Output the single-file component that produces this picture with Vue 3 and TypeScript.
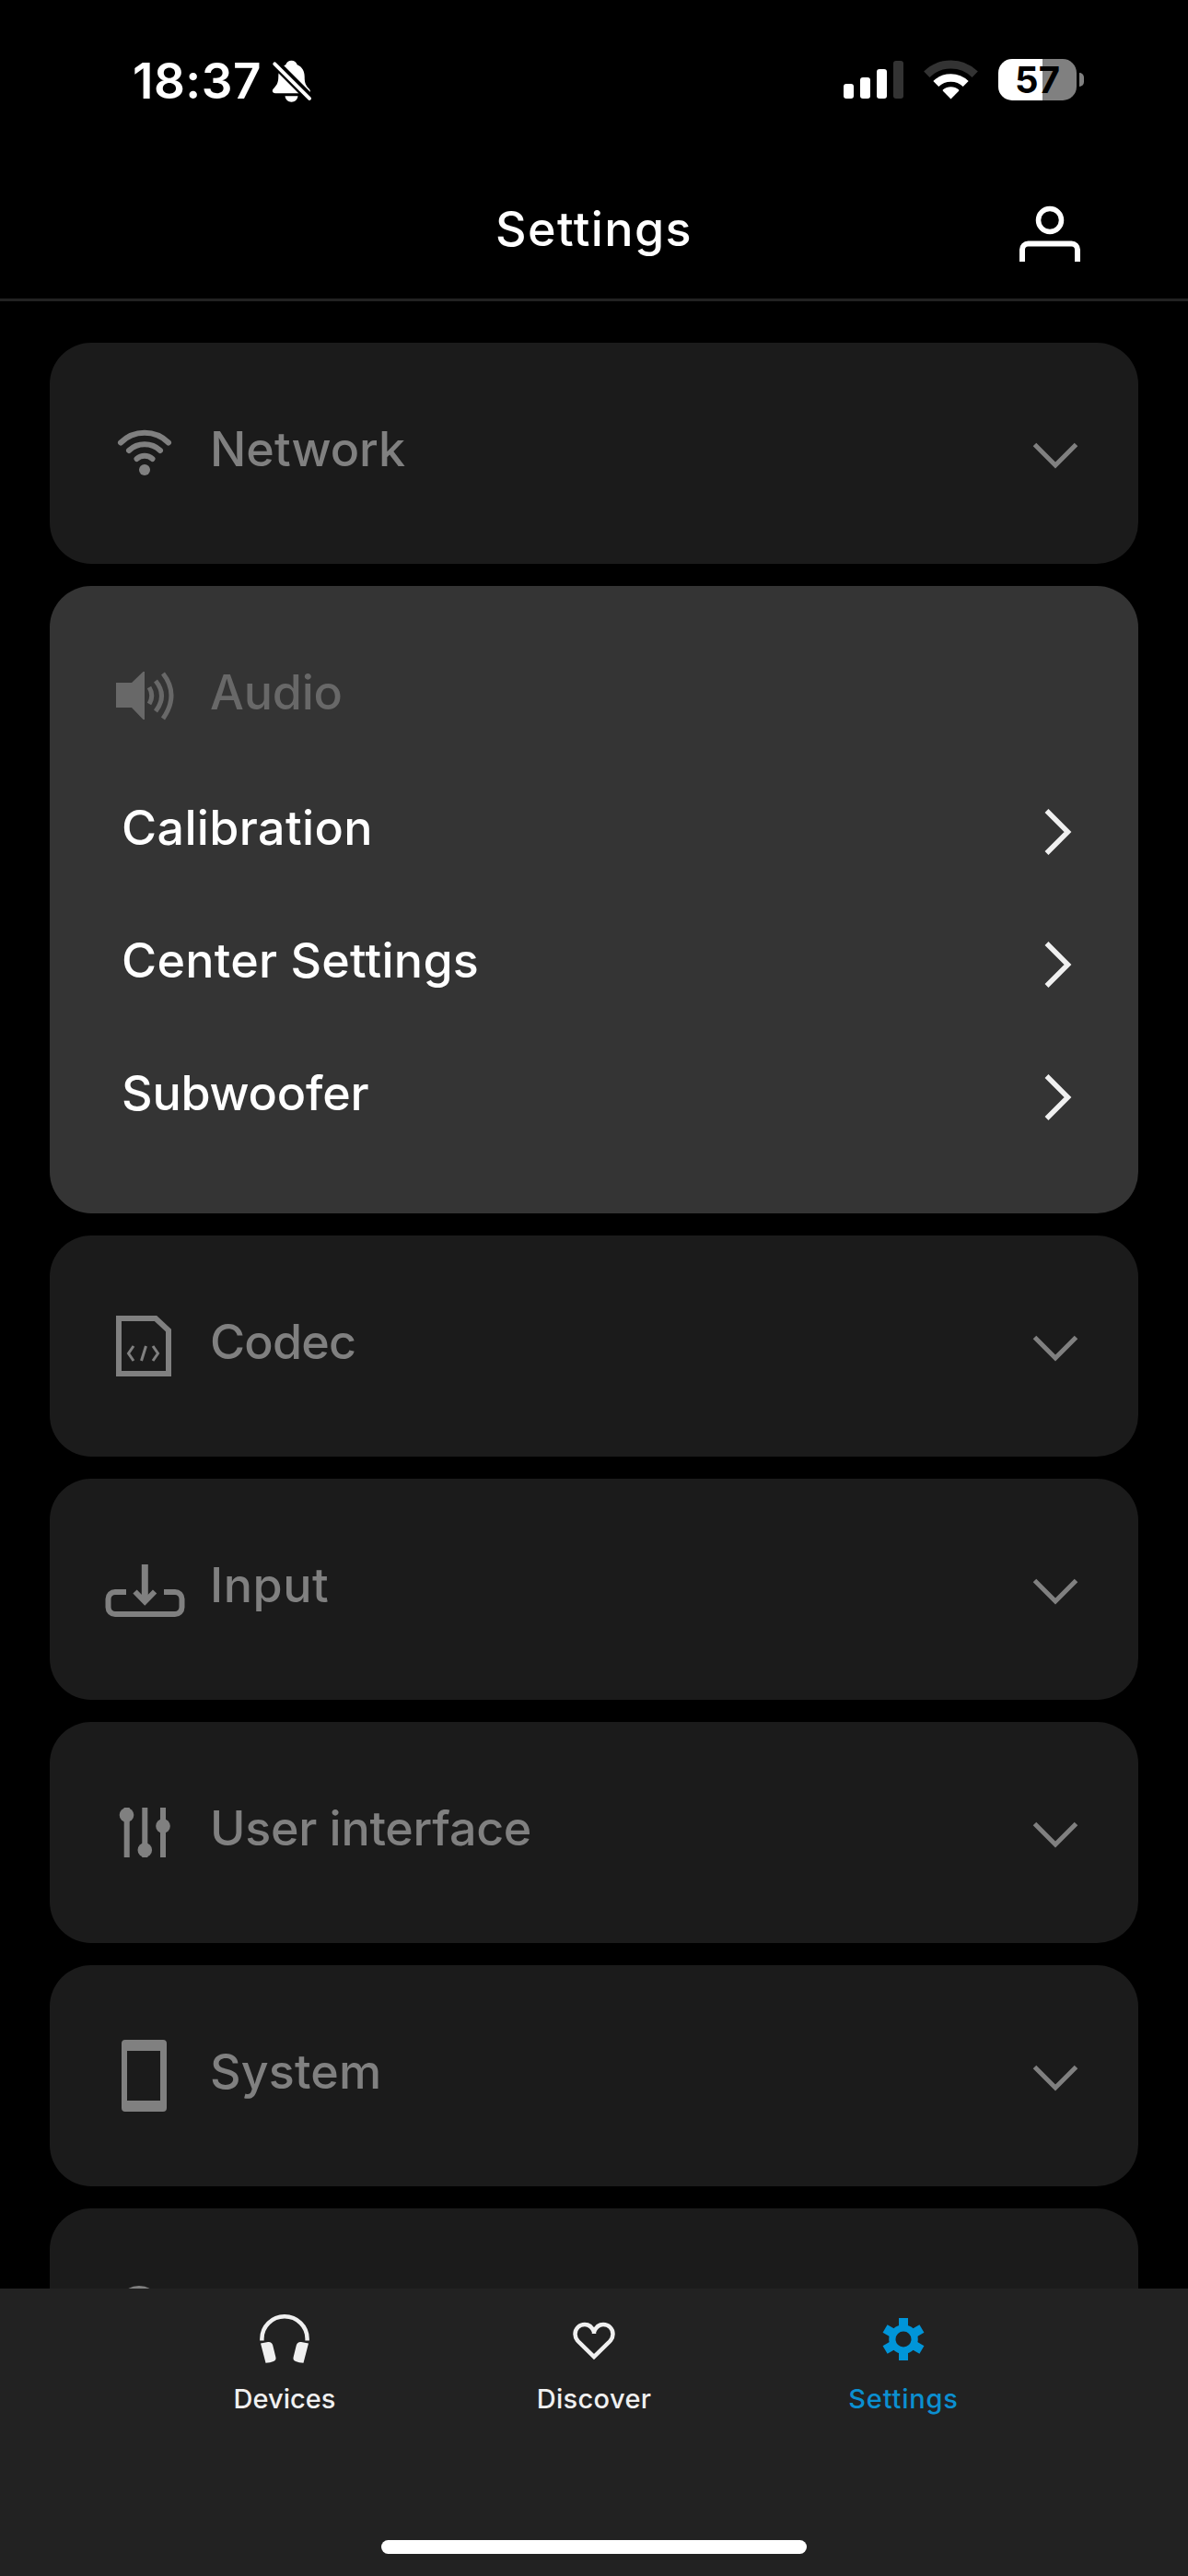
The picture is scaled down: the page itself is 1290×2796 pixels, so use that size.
<script setup lang="ts">
interface Section {
  id: string
  label: string
  tracking: number
  items?: { label: string; tracking: number }[]
}

const sections: Section[] = [
  { id: 'network', label: 'Network', tracking: 0 },
  {
    id: 'audio',
    label: 'Audio',
    tracking: -0.2,
    items: [
      { label: 'Calibration', tracking: 0.36 },
      { label: 'Center Settings', tracking: 0.25 },
      { label: 'Subwoofer', tracking: -0.2 },
    ],
  },
  { id: 'codec', label: 'Codec', tracking: -0.8 },
  { id: 'input', label: 'Input', tracking: 0.55 },
  { id: 'interface', label: 'User interface', tracking: -0.28 },
  { id: 'system', label: 'System', tracking: 0.15 },
  { id: 'more', label: '', tracking: 0 },
]

const tabs = [
  { id: 'devices', label: 'Devices', tracking: 0, active: false },
  { id: 'discover', label: 'Discover', tracking: 0.35, active: false },
  { id: 'settings', label: 'Settings', tracking: 0.8, active: true },
]
</script>

<template>
  <div class="screen">
    <div class="status">
      <span class="time">18:37</span>
      <svg class="bell" viewBox="294 60 48 55" width="48" height="55">
        <path fill="#fff" d="M316.500 65.700c3 0 5.500 2 6.200 4.600 5.300 2.200 8 7 8 13 0 7.500 1.500 9.500 5 13.200 2.300 2.500 1 4.800-1.700 4.800h-35c-3 0-4-2.500-2.300-4.700 3.500-4 5.600-6 5.600-13.300 0-6.500 2.700-10.800 8-13 .7-2.600 3.200-4.600 6.200-4.600z" />
        <path fill="#fff" d="M309.500 104.300h14c-.6 4-3.400 6.400-7 6.400s-6.400-2.400-7-6.400z" />
        <path stroke="#000" stroke-width="10" d="M296 66l43 43" />
        <path stroke="#fff" stroke-width="4" stroke-linecap="round" d="M298.300 69.300l37.700 37.500" />
      </svg>
      <svg class="signal" viewBox="916 60 66 55" width="66" height="55">
        <rect x="916" y="91" width="11" height="16" rx="3" fill="#fff" />
        <rect x="934" y="84" width="11" height="23" rx="3" fill="#fff" />
        <rect x="952" y="75" width="11" height="32" rx="3" fill="#fff" />
        <rect x="970" y="66" width="11" height="41" rx="3" fill="#333" />
      </svg>
      <svg class="wifi" viewBox="1002 60 62 55" width="62" height="55" fill="none">
        <path stroke="#333" stroke-width="9" d="M1006.300 80.700a37.500 37.500 0 0 1 52.400 0" />
        <path stroke="#fff" stroke-width="8.500" d="M1016.300 91a23.200 23.200 0 0 1 32.400 0" />
        <path fill="#fff" d="M1032.500 107.500l-8.600-8.800a1 1 0 0 1 .1-1.400 13 13 0 0 1 17 0 1 1 0 0 1 .1 1.400z" />
      </svg>
      <div class="battery"><span>57</span></div>
      <div class="nub"></div>
    </div>

    <header class="header">
      <h1>Settings</h1>
      <svg class="person" viewBox="1100 208 80 80" width="80" height="80" fill="none" stroke="#fff" stroke-width="6">
        <circle cx="1140" cy="239" r="12.500" stroke-width="5.500" />
        <path d="M1110 284v-13a6.500 6.500 0 0 1 6.500-6.500h47a6.500 6.500 0 0 1 6.500 6.500v13" />
      </svg>
    </header>

    <main class="list">
      <section v-for="s in sections" :key="s.id" class="card" :class="{ open: s.items }">
        <div class="head">
          <svg class="icon" viewBox="55 67 96 96" width="96" height="96" fill="none" stroke="currentColor" stroke-width="6">
            <g v-if="s.id === 'network'" stroke-linecap="round">
              <path d="M77 108.500a37 37 0 0 1 52 0" />
              <path d="M86 117a25 25 0 0 1 34 0" />
              <path d="M94.500 126a13 13 0 0 1 17 0" />
              <circle cx="103" cy="138" r="6" fill="currentColor" stroke="none" />
            </g>
            <g v-else-if="s.id === 'audio'" stroke-width="5">
              <path fill="currentColor" stroke="none" d="M72 105h17l12.500-12h1.500v52h-1.500L89 132H72z" />
              <path d="M108 110q5.500 9 0 18" />
              <path d="M115 103q13 16 0 33" />
              <path d="M123 95q18 23 0 49" />
            </g>
            <g v-else-if="s.id === 'codec'">
              <path d="M75 90h40l14 13v47H75z" />
              <path stroke-width="3" d="M91 120l-5.500 8 5.500 8M104.500 120l-5 16M112 120l5.500 8-5.500 8" />
            </g>
            <g v-else-if="s.id === 'input'">
              <path d="M83 123H71a7.500 7.500 0 0 0-7.500 7.500v9a7.500 7.500 0 0 0 7.500 7.500h65a7.500 7.500 0 0 0 7.500-7.500v-9a7.500 7.500 0 0 0-7.500-7.500h-12" />
              <path stroke-width="7" d="M103.300 93v41" />
              <path d="M92.500 122.500l10.800 11 10.800-11" />
            </g>
            <g v-else-if="s.id === 'interface'">
              <path d="M83.700 93v54M103.300 93v54M123 93v54" />
              <g fill="currentColor" stroke="none">
                <circle cx="83.500" cy="101" r="7.800" />
                <circle cx="103.300" cy="139" r="7.800" />
                <circle cx="123" cy="113" r="7.800" />
              </g>
            </g>
            <path
              v-else-if="s.id === 'system'"
              fill="currentColor"
              stroke="none"
              fill-rule="evenodd"
              d="M82 81h41a4 4 0 0 1 4 4v70a4 4 0 0 1-4 4H82a4 4 0 0 1-4-4V85a4 4 0 0 1 4-4zM84 93v54h36V93z"
            />
            <circle v-else cx="97" cy="108" r="21" />
          </svg>
          <span class="label" :style="{ letterSpacing: s.tracking + 'px' }">{{ s.label }}</span>
          <svg v-if="!s.items" class="down" viewBox="1062 85 60 60" width="60" height="60" fill="none" stroke="currentColor" stroke-width="5">
            <path d="M1069.500 110.500l22.500 22.500 22.500-22.500" />
          </svg>
        </div>
        <div v-for="item in s.items" :key="item.label" class="row">
          <span :style="{ letterSpacing: item.tracking + 'px' }">{{ item.label }}</span>
          <svg viewBox="1116 868 60 60" width="60" height="60" fill="none" stroke="#f0f0f0" stroke-width="5.500">
            <path d="M1136.500 880l23 23-23 23" />
          </svg>
        </div>
      </section>
    </main>

    <nav class="tabs">
      <div v-for="t in tabs" :key="t.id" class="tab" :class="{ active: t.active }">
        <svg v-if="t.id === 'devices'" viewBox="279 2509 60 60" width="60" height="60" fill="currentColor">
          <path fill="none" stroke="currentColor" stroke-width="4.500" d="M284.400 2540.500v-2a24.600 24.200 0 0 1 49.200 0v2" />
          <path d="M283 2543.500l8-1.500q4-.5 5.200 3.500l3.200 13q.8 3-2.400 4.600-3.500 1.500-8.500 1.600z" />
          <path d="M335 2543.500l-8-1.500q-4-.5-5.200 3.500l-3.200 13q-.8 3 2.400 4.600 3.500 1.500 8.500 1.600z" />
        </svg>
        <svg v-else-if="t.id === 'discover'" viewBox="615 2509 60 60" width="60" height="60" fill="none" stroke="currentColor" stroke-width="4.500">
          <path d="M645 2533v-2c-2-5-5.500-8-10-8-6 0-10.500 4.500-10.500 10.500 0 3 1.500 6 3.500 8l17 16.500 17-16.500c2-2 3.500-5 3.500-8 0-6-4.500-10.500-10.500-10.500-4.500 0-8 3-10 8" />
        </svg>
        <svg v-else viewBox="951 2509 60 60" width="60" height="60">
          <g fill="currentColor">
            <rect v-for="a in [0, 60, 120]" :key="a" x="976" y="2516" width="10" height="46" :transform="`rotate(${a} 981 2539)`" />
          </g>
          <circle cx="981" cy="2539" r="12" fill="none" stroke="currentColor" stroke-width="7.500" />
          <circle cx="981" cy="2539" r="8.500" fill="#222" />
        </svg>
        <span :style="{ letterSpacing: t.tracking + 'px' }">{{ t.label }}</span>
      </div>
      <div class="home"></div>
    </nav>
  </div>
</template>

<style>
html,
body {
  background: #000;
}
</style>

<style scoped>
.screen {
  width: 1290px;
  height: 2796px;
  overflow: hidden;
  display: flex;
  flex-direction: column;
  background: #000;
  color: #fff;
  font-family: Inter, 'Liberation Sans', sans-serif;
}
svg {
  display: block;
  flex: none;
}
.status {
  flex: none;
  height: 175px;
  display: flex;
  align-items: center;
  padding-left: 144px;
}
.time {
  width: 150px;
  font-size: 53px;
  font-weight: 600;
  letter-spacing: 0.5px;
  white-space: nowrap;
}
.signal {
  margin-left: 574px;
}
.wifi {
  margin-left: 20px;
}
.battery {
  margin: -2px 0 0 20px;
  width: 85px;
  height: 45px;
  border-radius: 15px;
  background: linear-gradient(90deg, #fff 48px, #808080 48px);
  color: #000;
  font-size: 40px;
  font-weight: 700;
  line-height: 45px;
  text-align: center;
}
.nub {
  margin: -2px 0 0 3px;
  width: 5px;
  height: 15px;
  border-radius: 0 8px 8px 0;
  background: #808080;
}
.header {
  flex: none;
  height: 152px;
  padding-bottom: 3px;
  border-bottom: 3px solid #222;
  box-sizing: border-box;
  display: grid;
  grid-template-columns: 1fr auto 1fr;
  align-items: center;
}
.header h1 {
  grid-column: 2;
  margin: 0;
  font-size: 52px;
  font-weight: 500;
  letter-spacing: 1.4px;
}
.person {
  justify-self: end;
  margin-right: 110px;
}
.list {
  flex: 1;
  min-height: 0;
  overflow: hidden;
  padding: 45px 54px 0;
  display: flex;
  flex-direction: column;
  gap: 24px;
}
.card {
  flex: none;
  height: 240px;
  border-radius: 45px;
  background: #1b1b1b;
  color: #808080;
  font-size: 52px;
  font-weight: 500;
}
.card.open {
  height: 681px;
  background: #343434;
  color: #686868;
}
.head {
  height: 190px;
  padding: 40px 60px 0 55px;
  box-sizing: border-box;
  display: flex;
  align-items: center;
}
.label {
  flex: 1;
  margin-left: 23px;
  white-space: nowrap;
}
.row {
  height: 144px;
  padding: 0 60px 0 78px;
  display: flex;
  align-items: center;
  justify-content: space-between;
  color: #fff;
  white-space: nowrap;
}
.tabs {
  flex: none;
  height: 312px;
  padding: 25px 141px 0;
  box-sizing: border-box;
  background: #222;
  display: grid;
  grid-template-columns: repeat(3, 336px);
  grid-template-rows: 248px 15px;
  justify-items: center;
}
.tab {
  display: flex;
  flex-direction: column;
  align-items: center;
  color: #f0f0f0;
  font-size: 29px;
  font-weight: 500;
  line-height: 36px;
}
.tab span {
  margin-top: 17px;
}
.tab.active {
  color: #0095d9;
}
.tab.active span {
  color: #0b8fd0;
}
.home {
  grid-column: 1 / 4;
  width: 462px;
  height: 15px;
  border-radius: 8px;
  background: #fff;
}
</style>
